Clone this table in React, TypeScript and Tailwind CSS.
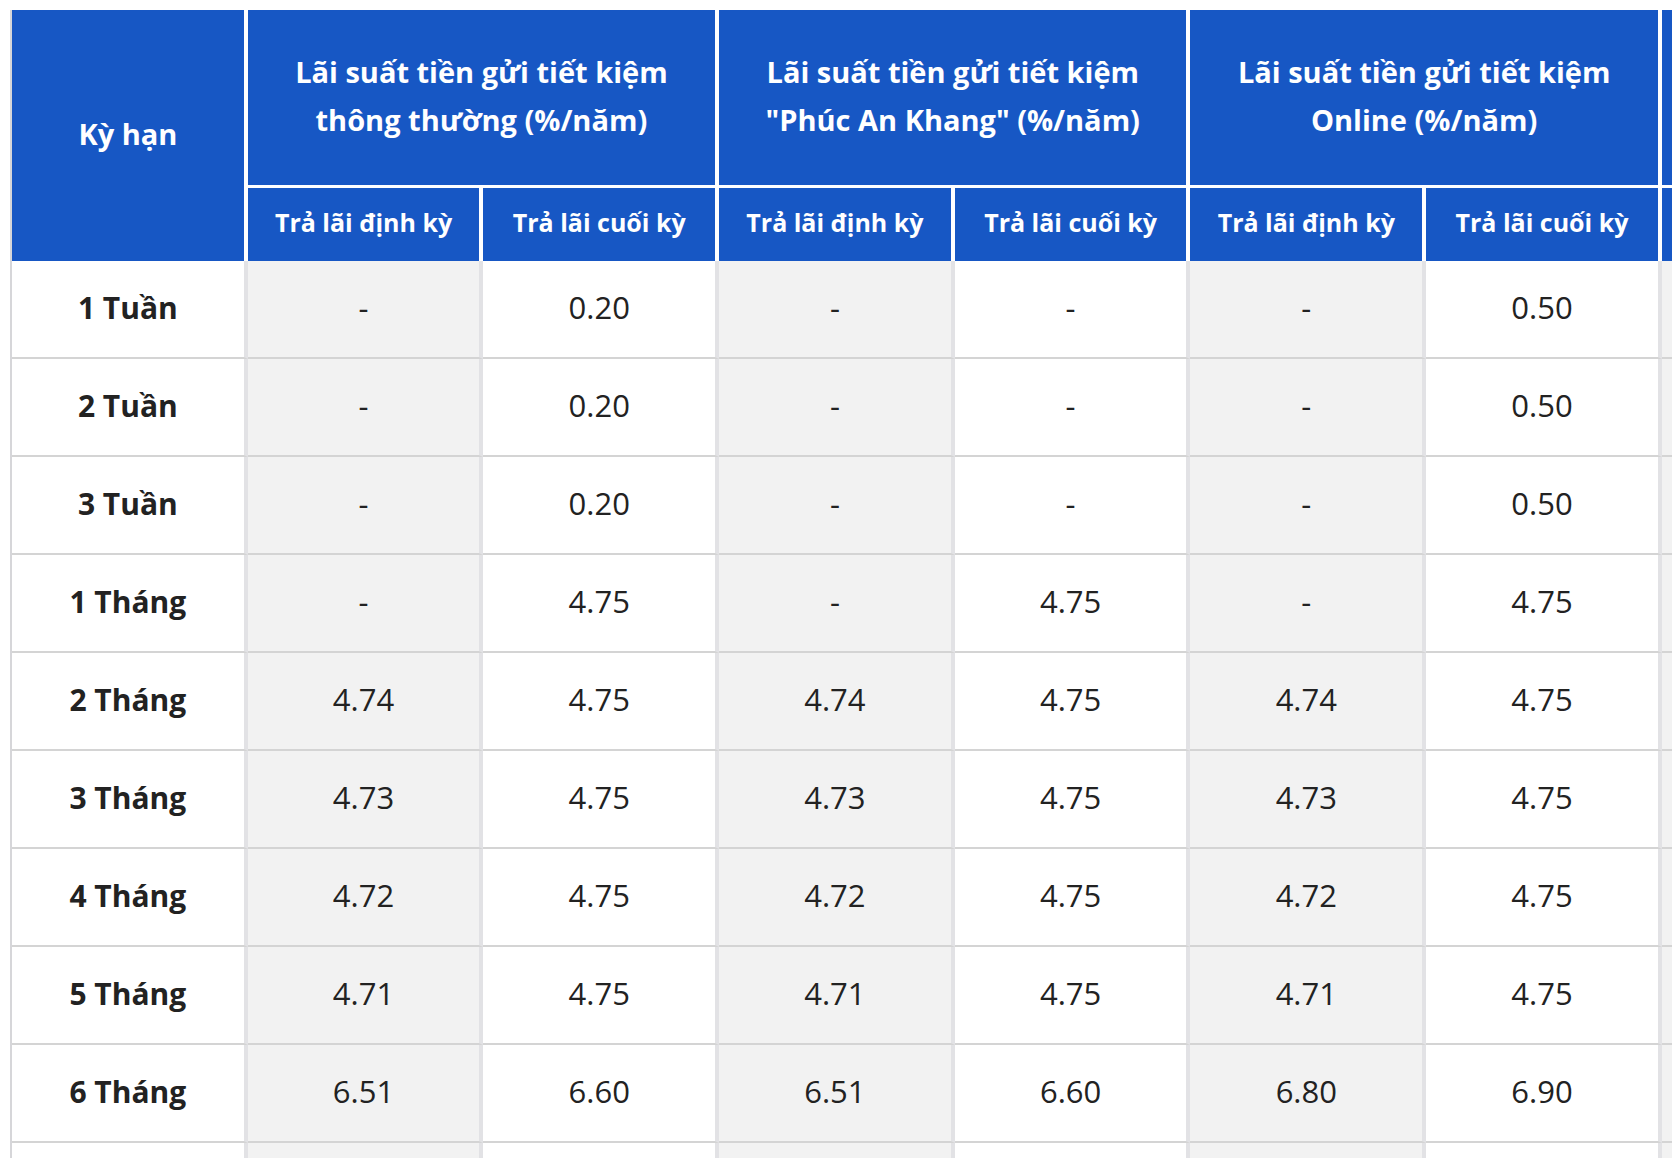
const groups = [
  ["Lãi suất tiền gửi tiết kiệm", "thông thường (%/năm)"],
  ["Lãi suất tiền gửi tiết kiệm", "\"Phúc An Khang\" (%/năm)"],
  ["Lãi suất tiền gửi tiết kiệm", "Online (%/năm)"],
]

const rows: [string, string[]][] = [
  ["1 Tuần", ["-", "0.20", "-", "-", "-", "0.50"]],
  ["2 Tuần", ["-", "0.20", "-", "-", "-", "0.50"]],
  ["3 Tuần", ["-", "0.20", "-", "-", "-", "0.50"]],
  ["1 Tháng", ["-", "4.75", "-", "4.75", "-", "4.75"]],
  ["2 Tháng", ["4.74", "4.75", "4.74", "4.75", "4.74", "4.75"]],
  ["3 Tháng", ["4.73", "4.75", "4.73", "4.75", "4.73", "4.75"]],
  ["4 Tháng", ["4.72", "4.75", "4.72", "4.75", "4.72", "4.75"]],
  ["5 Tháng", ["4.71", "4.75", "4.71", "4.75", "4.71", "4.75"]],
  ["6 Tháng", ["6.51", "6.60", "6.51", "6.60", "6.80", "6.90"]],
]

const font = { fontFamily: "'Open Sans', 'Noto Sans', sans-serif" }

export default function App() {
  return (
    <div className="w-[1672px] h-[1158px] overflow-hidden bg-white pt-[10px] pl-[10px]" style={font}>
      <table className="table-fixed border-separate border-spacing-0 border-l-2 border-[#d6d6d9] w-[1886px]">
        <colgroup>
          {Array.from({ length: 8 }).map((_, i) => (
            <col key={i} className="w-[235.7px]" />
          ))}
        </colgroup>
        <thead>
          <tr>
            <th
              rowSpan={2}
              className="bg-[#1757c4] text-white font-bold text-[29px] border-r-4 border-white align-middle pb-[4px]"
            >
              Kỳ hạn
            </th>
            {groups.map((g, i) => (
              <th
                key={i}
                colSpan={2}
                className="h-[178px] bg-[#1757c4] text-white font-bold text-[29px] leading-[48px] border-r-4 border-b-[3px] border-white align-middle pb-[3px]"
              >
                {g[0]}
                <br />
                {g[1]}
              </th>
            ))}
            <th className="bg-[#1757c4] border-b-[3px] border-white" />
          </tr>
          <tr>
            {Array.from({ length: 3 }).flatMap((_, i) => [
              <th
                key={`d${i}`}
                className="h-[73px] bg-[#1757c4] text-white font-bold text-[25px] border-r-4 border-white pb-[4px]"
              >
                Trả lãi định kỳ
              </th>,
              <th
                key={`c${i}`}
                className="h-[73px] bg-[#1757c4] text-white font-bold text-[25px] border-r-4 border-white pb-[4px]"
              >
                Trả lãi cuối kỳ
              </th>,
            ])}
            <th className="bg-[#1757c4]" />
          </tr>
        </thead>
        <tbody className="text-[#222222]">
          {rows.map(([term, vals]) => (
            <tr key={term}>
              <td className="h-[98px] bg-white text-center font-bold text-[30px] border-r-4 border-r-[#e2e2e5] border-b-2 border-b-[#d4d4d4] pb-[4px]">
                {term}
              </td>
              {vals.map((v, j) => (
                <td
                  key={j}
                  className={
                    (j % 2 === 0 ? "bg-[#f2f2f2] " : "bg-white ") +
                    "h-[98px] text-center text-[31px] border-r-4 border-r-[#e2e2e5] border-b-2 border-b-[#d4d4d4] pb-[4px]"
                  }
                >
                  {v}
                </td>
              ))}
              <td className="h-[98px] bg-[#f2f2f2] border-b-2 border-b-[#d4d4d4]" />
            </tr>
          ))}
          <tr>
            <td className="h-[98px] bg-white border-r-4 border-r-[#e2e2e5]" />
            {Array.from({ length: 6 }).map((_, j) => (
              <td
                key={j}
                className={(j % 2 === 0 ? "bg-[#f2f2f2] " : "bg-white ") + "h-[98px] border-r-4 border-r-[#e2e2e5]"}
              />
            ))}
            <td className="h-[98px] bg-[#f2f2f2]" />
          </tr>
        </tbody>
      </table>
    </div>
  )
}
